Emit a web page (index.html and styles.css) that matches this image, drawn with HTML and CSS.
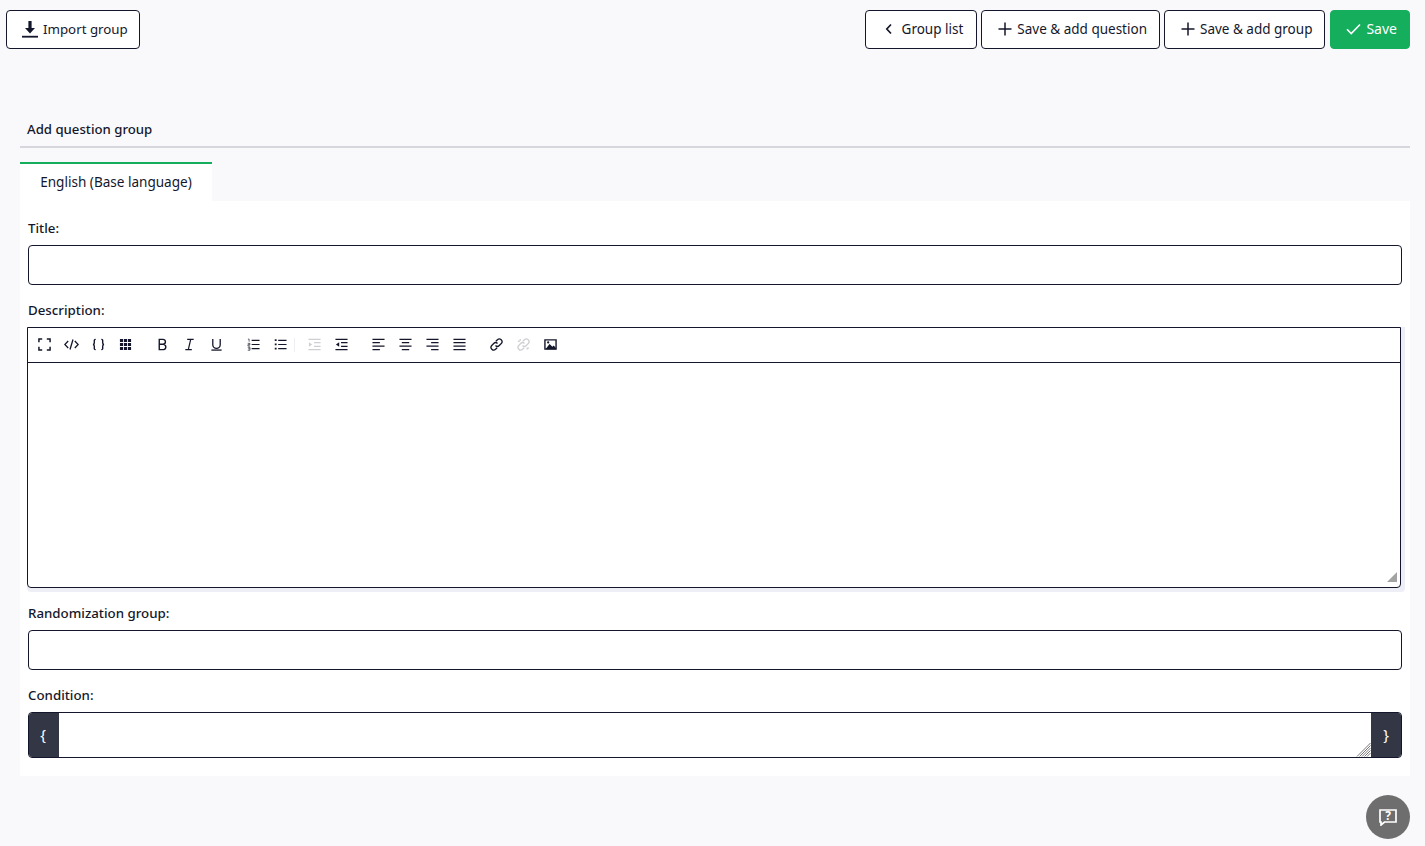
FILE: index.html
```html
<!DOCTYPE html>
<html lang="en">
<head>
<meta charset="utf-8">
<title>Add question group</title>
<link rel="stylesheet" href="styles.css">
</head>
<body>
<div class="topbar">
  <button class="btn btn-import"><svg class="ico" viewBox="0 0 16 17"><path d="M6.400 0h3.200v7h3.400L8 12.500 3 7h3.400z" fill="#14172b"/><rect x="0" y="14.800" width="16" height="1.800" fill="#14172b"/></svg>Import group</button>
  <div class="actions">
    <button class="btn btn-list"><svg class="ico-s" viewBox="0 0 10 12"><path d="M7 1.500 2.800 6 7 10.500" fill="none" stroke="#14172b" stroke-width="1.700"/></svg>Group list</button>
    <button class="btn btn-add"><svg class="ico-p" viewBox="0 0 14 14"><path d="M7 .5v13M.5 7h13" fill="none" stroke="#14172b" stroke-width="1.500"/></svg>Save &amp; add question</button>
    <button class="btn btn-add btn-add-group"><svg class="ico-p" viewBox="0 0 14 14"><path d="M7 .5v13M.5 7h13" fill="none" stroke="#14172b" stroke-width="1.500"/></svg>Save &amp; add group</button>
    <button class="btn btn-save"><svg class="ico-c" viewBox="0 0 15 12"><path d="M1 6.300 5.200 10.500 14 1.500" fill="none" stroke="#fff" stroke-width="1.600"/></svg>Save</button>
  </div>
</div>

<main class="content">
  <h1 class="page-title">Add question group</h1>
  <div class="tabs"><div class="tab">English (Base language)</div></div>
  <section class="panel">
    <label class="label">Title:</label>
    <div class="input"></div>

    <label class="label">Description:</label>
    <div class="editor-halo">
      <div class="editor">
        <div class="toolbar">
          <span class="tb"><svg viewBox="0 0 14 14"><path d="M1 4.500V1h3.500M9.500 1H13v3.500M13 9.500V13H9.500M4.500 13H1V9.500" fill="none" stroke="#14172b" stroke-width="1.600"/></svg></span>
          <span class="tb"><svg class="wide" viewBox="0 0 15 13"><path d="M4.200 3 .8 6.500 4.200 10M10.800 3l3.400 3.500-3.400 3.500M9 1.500 6 11.500" fill="none" stroke="#14172b" stroke-width="1.300"/></svg></span>
          <span class="tb"><svg viewBox="0 0 14 14"><path d="M4 1.500C2 1.500 2.500 3 2.500 5S1 7 1 7s1.500 0 1.500 2-.5 3.500 1.500 3.500M10 1.500c2 0 1.500 1.500 1.500 3.500S13 7 13 7s-1.500 0-1.500 2 .5 3.500-1.500 3.500" fill="none" stroke="#14172b" stroke-width="1.500"/></svg></span>
          <span class="tb tb-end"><svg viewBox="0 0 14 14"><path d="M1 1h3.400v3.400H1zM5.300 1h3.400v3.400H5.300zM9.600 1H13v3.400H9.600zM1 5.300h3.400v3.400H1zM5.300 5.300h3.400v3.400H5.300zM9.600 5.300H13v3.400H9.600zM1 9.600h3.400V13H1zM5.300 9.600h3.400V13H5.300zM9.600 9.600H13V13H9.600z" fill="#14172b"/></svg></span>

          <span class="tb"><svg viewBox="0 0 14 14"><path d="M3.500 1.500h4a2.600 2.600 0 0 1 0 5.300h-4zM3.500 6.800h4.700a2.900 2.900 0 0 1 0 5.700H3.500z" fill="none" stroke="#14172b" stroke-width="1.500"/></svg></span>
          <span class="tb"><svg viewBox="0 0 14 14"><path d="M4.500 1.500h7M2.500 12.500h7M8.300 1.500 5.700 12.500" fill="none" stroke="#14172b" stroke-width="1.300"/></svg></span>
          <span class="tb tb-end"><svg viewBox="0 0 14 14"><path d="M3 1v6.200a4 4 0 0 0 8 0V1" fill="none" stroke="#14172b" stroke-width="1.400"/><path d="M1.500 13h11" stroke="#14172b" stroke-width="1.400"/></svg></span>

          <span class="tb"><svg viewBox="0 0 14 14"><path d="M5 2.500h8.500M5 7h8.500M5 11.500h8.500" stroke="#14172b" stroke-width="1.300"/><path d="M1 1.200h1.300V4M.8 5.800h2.400v1.400H1v1.400h2.300M.8 10h2.400v3.200H.8M1.200 11.600h2" fill="none" stroke="#14172b" stroke-width=".7"/></svg></span>
          <span class="tb tb-sep"><svg viewBox="0 0 14 14"><path d="M4.500 2.500h9M4.500 7h9M4.500 11.500h9" stroke="#14172b" stroke-width="1.300"/><path d="M.8 1.300h2v2h-2zM.8 5.900h2v2h-2zM.8 10.500h2v2h-2z" fill="#14172b"/></svg></span>

          <span class="tb tb-off"><svg viewBox="0 0 14 14"><path d="M.5 1.500h13M6.500 5h7M6.500 9h7M.5 12.500h13" stroke="#14172b" stroke-width="1.300"/><path d="M1 4.500 4.500 7 1 9.500z" fill="#14172b"/></svg></span>
          <span class="tb tb-end"><svg viewBox="0 0 14 14"><path d="M.5 1.500h13M6.500 5h7M6.500 9h7M.5 12.500h13" stroke="#14172b" stroke-width="1.300"/><path d="M4.500 4.500 1 7l3.500 2.500z" fill="#14172b"/></svg></span>

          <span class="tb"><svg viewBox="0 0 14 14"><path d="M.5 1.500h13M.5 5h8M.5 8.800h13M.5 12.500h8" stroke="#14172b" stroke-width="1.300"/></svg></span>
          <span class="tb"><svg viewBox="0 0 14 14"><path d="M.5 1.500h13M3 5h8M.5 8.800h13M3 12.500h8" stroke="#14172b" stroke-width="1.300"/></svg></span>
          <span class="tb"><svg viewBox="0 0 14 14"><path d="M.5 1.500h13M5.500 5h8M.5 8.800h13M5.500 12.500h8" stroke="#14172b" stroke-width="1.300"/></svg></span>
          <span class="tb tb-end"><svg viewBox="0 0 14 14"><path d="M.5 1.500h13M.5 5h13M.5 8.800h13M.5 12.500h13" stroke="#14172b" stroke-width="1.300"/></svg></span>

          <span class="tb"><svg viewBox="0 0 14 14"><path d="M6.300 3.500 8 1.900a2.900 2.900 0 0 1 4.100 4.100L10 8.100a2.900 2.900 0 0 1-4.100 0M7.700 10.500 6 12.100A2.900 2.900 0 0 1 1.900 8L4 5.900a2.900 2.900 0 0 1 4.100 0" fill="none" stroke="#14172b" stroke-width="1.400"/></svg></span>
          <span class="tb tb-off"><svg viewBox="0 0 14 14"><path d="M6.300 3.500 8 1.900a2.900 2.900 0 0 1 4.100 4.100L10 8.100a2.900 2.900 0 0 1-4.100 0M7.700 10.500 6 12.100A2.900 2.900 0 0 1 1.900 8L4 5.900a2.900 2.900 0 0 1 4.100 0M1 3.500h2M3.500 1v2M11 10.500v2M10.500 11H13" fill="none" stroke="#14172b" stroke-width="1.400"/></svg></span>
          <span class="tb"><svg viewBox="0 0 14 14"><path d="M1 2h12v10H1z" fill="none" stroke="#14172b" stroke-width="1.500"/><path d="M2 11.500 6 6.500 9 9.500l1.500-1.500 2.500 3v1H2z" fill="#14172b"/><circle cx="4.500" cy="4.800" r="1.200" fill="#14172b"/></svg></span>
        </div>
        <div class="editor-body"><span class="resize-tri"></span></div>
      </div>
    </div>

    <label class="label label-rand">Randomization group:</label>
    <div class="input"></div>

    <label class="label">Condition:</label>
    <div class="cond">
      <span class="addon">{</span>
      <div class="cond-field"><svg class="grip" viewBox="0 0 15 15"><path d="M14.500 1 1 14.500M14.500 3.500 3.500 14.500M14.500 6 6 14.500M14.500 8.500 8.500 14.500M14.500 11 11 14.500" stroke="#777" stroke-width="1" fill="none"/></svg></div>
      <span class="addon">}</span>
    </div>
  </section>
</main>

<button class="help" aria-label="Help"><svg viewBox="0 0 18 18"><path d="M1 2h16v12H5.500L2 17V14H1z" fill="none" stroke="#fff" stroke-width="1.700"/><text x="9" y="12" text-anchor="middle" class="help-q">?</text></svg></button>
</body>
</html>
```

FILE: styles.css
```css
* { box-sizing: border-box; }
html, body { margin: 0; height: 846px; overflow: hidden; }
body {
  background: #f9f9fb;
  color: #14172b;
  font-family: "Noto Sans", "Liberation Sans", sans-serif;
  font-size: 14px;
  position: relative;
}
.topbar {
  display: flex;
  justify-content: space-between;
  padding: 10px 15px 0 6px;
}
.actions { display: flex; gap: 4px; }
.btn {
  display: inline-flex;
  align-items: center;
  height: 39px;
  padding: 0 12px 2px 15px;
  background: #fff;
  border: 1px solid #14172b;
  border-radius: 4px;
  color: #14172b;
  font: inherit;
  font-size: 13.5px;
  white-space: nowrap;
}
.btn-import { font-size: 13.3px; padding-bottom: 1px; padding-right: 11px; }
.btn-list { padding-left: 18px; padding-right: 13px; }
.btn-add { padding-left: 16px; }
.btn-add-group { padding-right: 12px; }
.btn-save {
  background: #14ae5c;
  border-color: #14ae5c;
  color: #fff;
  font-size: 14px;
  margin-left: 1px;
  padding-left: 15px;
  padding-right: 12px;
}
.ico { width: 16px; height: 17px; margin-right: 5px; }
.ico-s { width: 10px; height: 12px; margin-right: 8px; }
.ico-p { width: 14px; height: 14px; margin-right: 5px; }
.ico-c { width: 15px; height: 12px; margin-right: 5px; }

.content { margin: 0 15px 0 20px; }
.page-title {
  margin: 69px 0 0;
  height: 30px;
  padding: 0 0 0 7px;
  border-bottom: 2px solid #d6d6dd;
  font-size: 13.2px;
  font-weight: 500;
  line-height: 23px;
}
.tabs { margin-top: 14px; display: flex; }
.tab {
  width: 192px;
  height: 39px;
  background: #fff;
  border-top: 2px solid #14ae5c;
  text-align: center;
  line-height: 37px;
  font-size: 13.55px;
}
.panel {
  background: #fff;
  height: 575px;
  padding: 18px 8px 0;
}
.label {
  display: block;
  height: 26px;
  line-height: 18px;
  font-weight: 500;
  font-size: 13.3px;
}
.input {
  height: 40px;
  margin-bottom: 16px;
  background: #fff;
  border: 1px solid #14172b;
  border-radius: 4px;
}
.editor-halo {
  margin: 0 -3px 0 -1px;
  padding: 0 4px 4px 0;
  background: #eeeef7;
  border-radius: 0 0 4px 4px;
  height: 265px;
}
.editor {
  height: 261px;
  background: #fff;
  border: 1px solid #14172b;
  border-radius: 0 0 4px 4px;
  display: flex;
  flex-direction: column;
}
.toolbar {
  height: 35px;
  flex: none;
  border-bottom: 1px solid #14172b;
  display: flex;
  align-items: center;
  padding: 0 0 1px 3px;
}
.tb {
  width: 27px;
  height: 27px;
  flex: none;
  display: flex;
  align-items: center;
  justify-content: center;
}
.tb svg { width: 13px; height: 13px; display: block; }
.tb svg.wide { width: 15px; }
.tb-end { margin-right: 10px; }
.tb-sep { margin-right: 6px; border-right: 1px solid #eeeef2; height: 14px; width: 28px; padding-right: 1px; }
.tb-off svg { opacity: .2; }
.editor-body { flex: 1; position: relative; }
.resize-tri {
  position: absolute;
  right: 3px;
  bottom: 5px;
  width: 0;
  height: 0;
  border-left: 10px solid transparent;
  border-bottom: 10px solid #a3a3a3;
}
.label-rand { margin-top: 12px; }
.cond {
  display: flex;
  height: 46px;
  border: 1px solid #14172b;
  border-radius: 4px;
  overflow: hidden;
}
.addon {
  width: 30px;
  flex: none;
  background: #333645;
  color: #fff;
  display: flex;
  align-items: center;
  justify-content: center;
  font-size: 15px;
  padding-bottom: 3px;
}
.addon:first-child { padding-right: 2px; }
.cond-field { flex: 1; position: relative; background: #fff; }
.grip { position: absolute; right: 0; bottom: 0; width: 15px; height: 15px; }
.help {
  position: absolute;
  left: 1366px;
  top: 795px;
  width: 44px;
  height: 44px;
  padding: 0;
  border: 0;
  border-radius: 50%;
  background: #6e6e6e;
  display: flex;
  align-items: center;
  justify-content: center;
}
.help svg { width: 18px; height: 18px; }
.help-q { fill: #fff; font-size: 12px; font-weight: 700; font-family: "Noto Sans", sans-serif; }
```
